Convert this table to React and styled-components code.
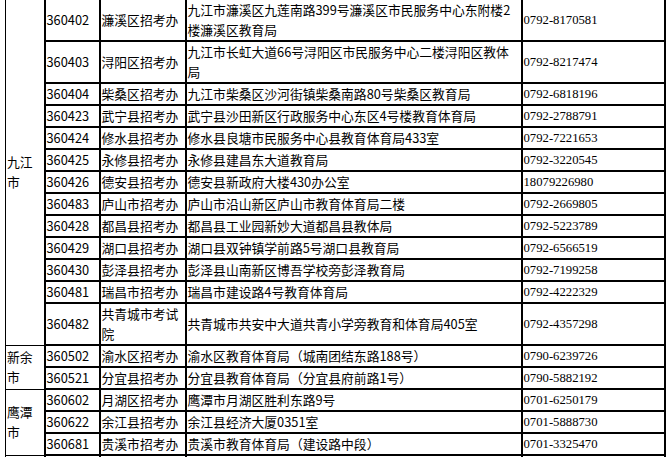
import React from 'react'
import styled, { createGlobalStyle } from 'styled-components'

const GlobalStyle = createGlobalStyle`
    html, body {
        margin: 0;
        padding: 0;
        background: #fff;
    }
`

// each city group; text that wraps in the original is split into lines
const groups = [
    {
        city: ['九江', '市'],
        rows: [
            ['360402', ['濂溪区招考办'], ['九江市濂溪区九莲南路399号濂溪区市民服务中心东附楼2', '楼濂溪区教育局'], '0792-8170581'],
            ['360403', ['浔阳区招考办'], ['九江市长虹大道66号浔阳区市民服务中心二楼浔阳区教体', '局'], '0792-8217474'],
            ['360404', ['柴桑区招考办'], ['九江市柴桑区沙河街镇柴桑南路80号柴桑区教育局'], '0792-6818196'],
            ['360423', ['武宁县招考办'], ['武宁县沙田新区行政服务中心东区4号楼教育体育局'], '0792-2788791'],
            ['360424', ['修水县招考办'], ['修水县良塘市民服务中心县教育体育局433室'], '0792-7221653'],
            ['360425', ['永修县招考办'], ['永修县建昌东大道教育局'], '0792-3220545'],
            ['360426', ['德安县招考办'], ['德安县新政府大楼430办公室'], '18079226980'],
            ['360483', ['庐山市招考办'], ['庐山市沿山新区庐山市教育体育局二楼'], '0792-2669805'],
            ['360428', ['都昌县招考办'], ['都昌县工业园新妙大道都昌县教体局'], '0792-5223789'],
            ['360429', ['湖口县招考办'], ['湖口县双钟镇学前路5号湖口县教育局'], '0792-6566519'],
            ['360430', ['彭泽县招考办'], ['彭泽县山南新区博吾学校旁彭泽教育局'], '0792-7199258'],
            ['360481', ['瑞昌市招考办'], ['瑞昌市建设路4号教育体育局'], '0792-4222329'],
            ['360482', ['共青城市考试', '院'], ['共青城市共安中大道共青小学旁教育和体育局405室'], '0792-4357298'],
        ],
    },
    {
        city: ['新余', '市'],
        rows: [
            ['360502', ['渝水区招考办'], ['渝水区教育体育局（城南团结东路188号）'], '0790-6239726'],
            ['360521', ['分宜县招考办'], ['分宜县教育体育局（分宜县府前路1号）'], '0790-5882192'],
        ],
    },
    {
        city: ['鹰潭', '市'],
        rows: [
            ['360602', ['月湖区招考办'], ['鹰潭市月湖区胜利东路9号'], '0701-6250179'],
            ['360622', ['余江县招考办'], ['余江县经济大厦0351室'], '0701-5888730'],
            ['360681', ['贵溪市招考办'], ['贵溪市教育体育局（建设路中段）'], '0701-3325470'],
        ],
    },
    {
        // next group starts just below the visible area; only its borders show
        city: [''],
        rows: [
            ['next', [''], [''], ''],
        ],
    },
]

function Lines({ lines }) {
    return lines.map((line, i) => (
        <React.Fragment key={i}>
            {i > 0 && <br />}
            {line}
        </React.Fragment>
    ))
}

function App() {
    return (
        <Sheet>
            <GlobalStyle />
            <Table>
                <colgroup>
                    <Col $w={39} />
                    <Col $w={55} />
                    <Col $w={86} />
                    <Col $w={336} />
                    <Col $w={143} />
                </colgroup>
                <tbody>
                    {groups.map(group =>
                        group.rows.map((row, index) => (
                            <tr key={row[0]}>
                                {index === 0 && (
                                    <CityCell rowSpan={group.rows.length}>
                                        <Lines lines={group.city} />
                                    </CityCell>
                                )}
                                <Cell>{row[0] === 'next' ? '' : row[0]}</Cell>
                                <Cell><Lines lines={row[1]} /></Cell>
                                <Cell><Lines lines={row[2]} /></Cell>
                                <PhoneCell>{row[3]}</PhoneCell>
                            </tr>
                        ))
                    )}
                </tbody>
            </Table>
        </Sheet>
    )
}

export default App

const Sheet = styled.div`
    padding-left: 5px;
    margin-top: -2px;
    overflow: hidden;
`

const Table = styled.table`
    border-collapse: collapse;
    table-layout: fixed;
    width: 659px;
    font-family: "Noto Sans CJK SC", "Microsoft YaHei", sans-serif;
    font-size: 12.8px;
    color: #000;
`

const Col = styled.col`
    width: ${props => props.$w}px;
`

const Cell = styled.td`
    border: 2px solid #000;
    padding: 0 0 0 1px;
    height: 20px;
    line-height: 20px;
    vertical-align: middle;
    white-space: nowrap;
    overflow: hidden;
`

const CityCell = styled(Cell)`
    border-width: 1px 2px 1px 1px;
`

const PhoneCell = styled(Cell)`
    font-family: "Liberation Serif", "Times New Roman", serif;
    font-size: 12.7px;
`
